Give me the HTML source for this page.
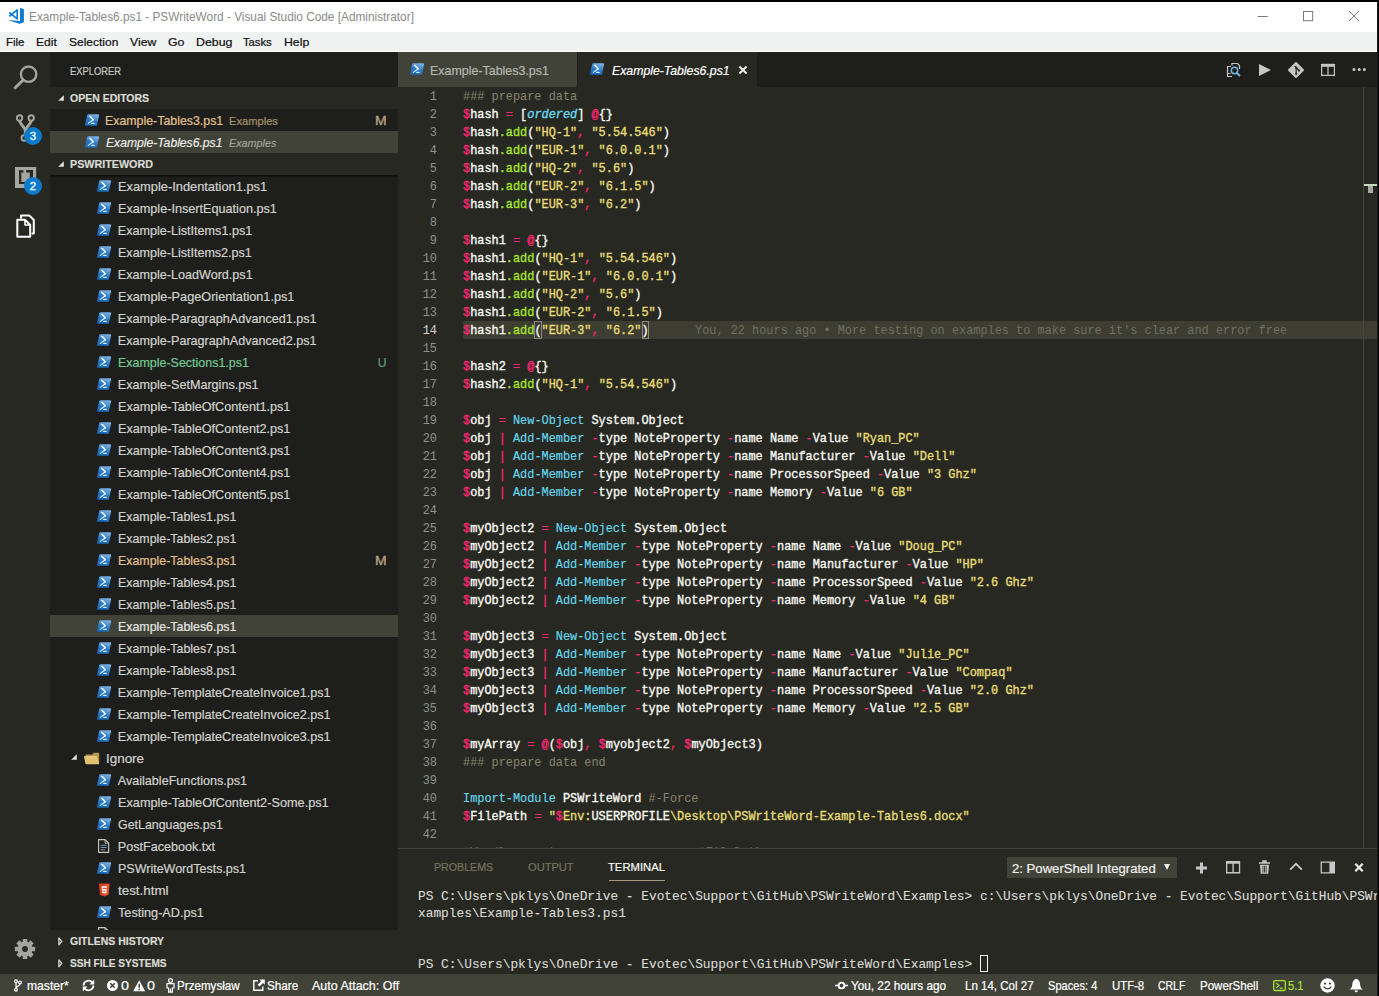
<!DOCTYPE html>
<html><head><meta charset="utf-8"><title>Example-Tables6.ps1 - PSWriteWord - Visual Studio Code</title>
<style>
*{box-sizing:border-box;margin:0;padding:0}
html,body{width:1379px;height:996px;overflow:hidden;background:#000}
body{font-family:"Liberation Sans",sans-serif;font-size:12.6px;color:#ccc;position:relative}
svg{display:block;overflow:visible}
#win{position:absolute;left:0;top:0;width:1377px;height:996px;overflow:hidden;background:#272822}
.badge{position:absolute;width:18px;height:18px;border-radius:9px;background:#0a7bcc;color:#fff;font-size:11.5px;text-align:center;line-height:18px;-webkit-text-stroke:0.3px #fff}
#ed{position:absolute;left:398px;top:87px;width:979px;height:761px;background:#272822;overflow:hidden;font-family:"Liberation Mono",monospace;font-size:11.9px}
.ln{position:absolute;left:0;width:39px;text-align:right;color:#90908a;height:18px;line-height:20px;white-space:pre}
.ln.cur{color:#d4d4cf}
.cl{position:absolute;left:65px;height:18px;line-height:20px;white-space:pre;color:#f8f8f2}
.cl span{-webkit-text-stroke:0.35px currentColor}
.k{color:#f92672}.w{color:#f8f8f2}.s{color:#e6db74}.f{color:#a6e22e}.c{color:#66d9ef}.cl .c{-webkit-text-stroke:0.15px currentColor}.t{color:#66d9ef;font-style:italic}.cm{color:#88846f}
.cl .cm{-webkit-text-stroke:0}
.cl .k{-webkit-text-stroke:0.3px currentColor}
.bl{color:#6e7062}
#term{position:absolute;left:418px;top:888px;font-family:"Liberation Mono",monospace;font-size:12.83px;color:#dadad5;white-space:pre;line-height:17px;-webkit-text-stroke:0.12px #dadad5}
</style></head>
<body>
<div id="win">
<svg width="0" height="0" style="position:absolute"><defs><linearGradient id="pg" x1="0.2" y1="1" x2="0.6" y2="0"><stop offset="0" stop-color="#1565b8"/><stop offset="0.5" stop-color="#2a7bcb"/><stop offset="1" stop-color="#78afe2"/></linearGradient></defs></svg>
<div style="position:absolute;left:0px;top:2px;width:1377px;height:30px;background:#fff;"></div>
<svg style="position:absolute;left:7px;top:7px" width="18" height="18" viewBox="0 0 18 18"><path d="M13 0.8L16.9 2.3V15.2L13 16.7Z" fill="#0d7acf"/><path d="M1 13.1L13 14V16.7H12.2Z" fill="#0d7acf"/><path d="M2.3 5.5L10.2 11.9V2.9L2.3 9.3" fill="none" stroke="#0d7acf" stroke-width="1.7" stroke-linejoin="round" stroke-linecap="butt"/></svg>
<span style="position:absolute;left:28.5px;top:7px;line-height:20px;white-space:pre;font-size:12.4px;color:#8a8a8a;transform:scaleX(0.9538);transform-origin:0 0;">Example-Tables6.ps1 - PSWriteWord - Visual Studio Code [Administrator]</span>
<svg style="position:absolute;left:1255px;top:8px" width="110" height="18" viewBox="0 0 110 18"><path d="M2.6 8.5H12.8" stroke="#7a7a7a" stroke-width="1"/><rect x="48.5" y="3.5" width="9.2" height="9.2" fill="none" stroke="#7a7a7a" stroke-width="1"/><path d="M94 3L104 13M104 3L94 13" stroke="#7a7a7a" stroke-width="1"/></svg>
<div style="position:absolute;left:0px;top:32px;width:1377px;height:19px;background:#f0f1f1;"></div>
<div style="position:absolute;left:0px;top:51px;width:1377px;height:1px;background:#fdfdfd;"></div>
<span style="position:absolute;left:6.0px;top:32px;line-height:20px;white-space:pre;font-size:11.8px;color:#0c0c0c;-webkit-text-stroke:0.2px #0c0c0c;transform:scaleX(0.9729);transform-origin:0 0;">File</span>
<span style="position:absolute;left:35.9px;top:32px;line-height:20px;white-space:pre;font-size:11.8px;color:#0c0c0c;-webkit-text-stroke:0.2px #0c0c0c;transform:scaleX(1.0232);transform-origin:0 0;">Edit</span>
<span style="position:absolute;left:68.7px;top:32px;line-height:20px;white-space:pre;font-size:11.8px;color:#0c0c0c;-webkit-text-stroke:0.2px #0c0c0c;transform:scaleX(1.0158);transform-origin:0 0;">Selection</span>
<span style="position:absolute;left:129.7px;top:32px;line-height:20px;white-space:pre;font-size:11.8px;color:#0c0c0c;-webkit-text-stroke:0.2px #0c0c0c;transform:scaleX(1.0371);transform-origin:0 0;">View</span>
<span style="position:absolute;left:167.7px;top:32px;line-height:20px;white-space:pre;font-size:11.8px;color:#0c0c0c;-webkit-text-stroke:0.2px #0c0c0c;transform:scaleX(1.0413);transform-origin:0 0;">Go</span>
<span style="position:absolute;left:195.8px;top:32px;line-height:20px;white-space:pre;font-size:11.8px;color:#0c0c0c;-webkit-text-stroke:0.2px #0c0c0c;transform:scaleX(1.0470);transform-origin:0 0;">Debug</span>
<span style="position:absolute;left:243.0px;top:32px;line-height:20px;white-space:pre;font-size:11.8px;color:#0c0c0c;-webkit-text-stroke:0.2px #0c0c0c;transform:scaleX(0.9517);transform-origin:0 0;">Tasks</span>
<span style="position:absolute;left:284.1px;top:32px;line-height:20px;white-space:pre;font-size:11.8px;color:#0c0c0c;-webkit-text-stroke:0.2px #0c0c0c;transform:scaleX(1.0385);transform-origin:0 0;">Help</span>
<div style="position:absolute;left:0px;top:52px;width:50px;height:922px;background:#272822;"></div>
<svg style="position:absolute;left:11px;top:63px" width="30" height="30" viewBox="0 0 30 30"><circle cx="17.6" cy="11.2" r="7.7" fill="none" stroke="#a5a59f" stroke-width="2.4"/><path d="M12.2 17L4.2 24.8" stroke="#a5a59f" stroke-width="3" stroke-linecap="round"/></svg>
<svg style="position:absolute;left:11px;top:112px" width="30" height="30" viewBox="0 0 30 30"><g fill="none" stroke="#a5a59f" stroke-width="1.9"><circle cx="8.6" cy="6" r="2.7"/><circle cx="20.2" cy="6" r="2.7"/><circle cx="13.2" cy="26" r="2.7"/></g><path d="M8.6 8.6C8.6 13 14.4 14.5 14.4 19V22.4M20.2 8.6C20.2 13 14.4 14.5 14.4 19" fill="none" stroke="#a5a59f" stroke-width="3.1"/></svg>
<div class="badge" style="left:24px;top:127px">3</div>
<svg style="position:absolute;left:11px;top:163px" width="30" height="30" viewBox="0 0 30 30"><path d="M4 4H25.2V25H4Z" fill="#a5a59f"/><path d="M8 7.2H12.5V9.6H10.3V19H18.8V9.6H15.2V7H22V14H20.6V21H8Z" fill="#272822"/></svg>
<div class="badge" style="left:24px;top:177px">2</div>
<svg style="position:absolute;left:11px;top:212px" width="30" height="30" viewBox="0 0 30 30"><g fill="none" stroke="#fff" stroke-width="2" stroke-linejoin="round"><path d="M6.3 7.7H14L19.2 13V24.7H6.3Z"/><path d="M14 7.7V13H19.2" stroke-width="1.6"/><path d="M10 6.4V3.6H18.5L22.8 8V21.5H20.6"/></g></svg>
<svg style="position:absolute;left:13px;top:937.3px" width="24" height="24" viewBox="0 0 24 24"><g transform="translate(12 12) scale(0.9)"><g fill="#a5a59f"><rect x="-2.5" y="-11.2" width="5" height="22.4" rx="0.5"/><rect x="-2.5" y="-11.2" width="5" height="22.4" rx="0.5" transform="rotate(45)"/><rect x="-2.5" y="-11.2" width="5" height="22.4" rx="0.5" transform="rotate(90)"/><rect x="-2.5" y="-11.2" width="5" height="22.4" rx="0.5" transform="rotate(135)"/><circle r="8.3"/></g><circle r="3.2" fill="#272822"/></g></svg>
<div style="position:absolute;left:50px;top:52px;width:348px;height:922px;background:#1e1f1c;"></div>
<span style="position:absolute;left:69.6px;top:61px;line-height:20px;white-space:pre;font-size:10.6px;color:#c8c8c3;-webkit-text-stroke:0.2px #c8c8c3;transform:scaleX(0.8856);transform-origin:0 0;">EXPLORER</span>
<div style="position:absolute;left:50px;top:87px;width:348px;height:22px;background:#272822;"></div>
<svg style="position:absolute;left:57.6px;top:94.6px" width="6" height="6" viewBox="0 0 6 6"><path d="M5.8 0.2V5.8H0.2Z" fill="#e2e2e2"/></svg>
<span style="position:absolute;left:69.6px;top:88px;line-height:20px;white-space:pre;font-size:10.6px;color:#dadad5;-webkit-text-stroke:0.2px #dadad5;font-weight:bold;transform:scaleX(0.9903);transform-origin:0 0;">OPEN EDITORS</span>
<svg style="position:absolute;left:85px;top:114px" width="14.2" height="12" viewBox="0 0 14.2 12"><path d="M3.2 0.2H13.3Q14.3 0.2 14.1 1.2L12 10.9Q11.8 11.8 10.9 11.8H0.8Q-0.2 11.8 0 10.9L2.2 1.1Q2.4 0.2 3.2 0.2Z" fill="url(#pg)"/><path d="M4.8 2.2L8.3 5.8" fill="none" stroke="#fff" stroke-width="1.5" stroke-linecap="round"/><path d="M8.3 5.8L3.3 9.4" fill="none" stroke="#f4f9fd" stroke-width="1.05" stroke-linecap="round"/><path d="M6.6 9.4H9.2" stroke="#d8e8f6" stroke-width="1.1" stroke-linecap="round"/></svg>
<span style="position:absolute;left:105.2px;top:111px;line-height:20px;white-space:pre;font-size:12.6px;color:#e2c08d;-webkit-text-stroke:0.2px #e2c08d;transform:scaleX(0.9817);transform-origin:0 0;">Example-Tables3.ps1</span>
<span style="position:absolute;left:229.3px;top:111px;line-height:20px;white-space:pre;font-size:11.4px;color:#a5946b;-webkit-text-stroke:0.2px #a5946b;transform:scaleX(0.9777);transform-origin:0 0;">Examples</span>
<span style="position:absolute;left:375.1px;top:111px;line-height:20px;white-space:pre;font-size:12px;color:#b39f76;-webkit-text-stroke:0.4px #b39f76;transform:scaleX(1.1600);transform-origin:0 0;">M</span>
<div style="position:absolute;left:50px;top:131px;width:348px;height:22px;background:#414339;"></div>
<svg style="position:absolute;left:85px;top:136px" width="14.2" height="12" viewBox="0 0 14.2 12"><path d="M3.2 0.2H13.3Q14.3 0.2 14.1 1.2L12 10.9Q11.8 11.8 10.9 11.8H0.8Q-0.2 11.8 0 10.9L2.2 1.1Q2.4 0.2 3.2 0.2Z" fill="url(#pg)"/><path d="M4.8 2.2L8.3 5.8" fill="none" stroke="#fff" stroke-width="1.5" stroke-linecap="round"/><path d="M8.3 5.8L3.3 9.4" fill="none" stroke="#f4f9fd" stroke-width="1.05" stroke-linecap="round"/><path d="M6.6 9.4H9.2" stroke="#d8e8f6" stroke-width="1.1" stroke-linecap="round"/></svg>
<span style="position:absolute;left:106.1px;top:133px;line-height:20px;white-space:pre;font-size:12.6px;color:#ecece7;-webkit-text-stroke:0.2px #ecece7;font-style:italic;transform:scaleX(0.9647);transform-origin:0 0;">Example-Tables6.ps1</span>
<span style="position:absolute;left:228.9px;top:133px;line-height:20px;white-space:pre;font-size:11.4px;color:#a3a398;-webkit-text-stroke:0.2px #a3a398;font-style:italic;transform:scaleX(0.9477);transform-origin:0 0;">Examples</span>
<div style="position:absolute;left:50px;top:153px;width:348px;height:22px;background:#272822;"></div>
<svg style="position:absolute;left:57.6px;top:160.6px" width="6" height="6" viewBox="0 0 6 6"><path d="M5.8 0.2V5.8H0.2Z" fill="#e2e2e2"/></svg>
<span style="position:absolute;left:69.6px;top:154px;line-height:20px;white-space:pre;font-size:10.6px;color:#dadad5;-webkit-text-stroke:0.2px #dadad5;font-weight:bold;transform:scaleX(1.0133);transform-origin:0 0;">PSWRITEWORD</span>
<div style="position:absolute;left:0;top:0;width:398px;height:930px;overflow:hidden"><svg style="position:absolute;left:97px;top:180px" width="14.2" height="12" viewBox="0 0 14.2 12"><path d="M3.2 0.2H13.3Q14.3 0.2 14.1 1.2L12 10.9Q11.8 11.8 10.9 11.8H0.8Q-0.2 11.8 0 10.9L2.2 1.1Q2.4 0.2 3.2 0.2Z" fill="url(#pg)"/><path d="M4.8 2.2L8.3 5.8" fill="none" stroke="#fff" stroke-width="1.5" stroke-linecap="round"/><path d="M8.3 5.8L3.3 9.4" fill="none" stroke="#f4f9fd" stroke-width="1.05" stroke-linecap="round"/><path d="M6.6 9.4H9.2" stroke="#d8e8f6" stroke-width="1.1" stroke-linecap="round"/></svg><span style="position:absolute;left:117.8px;top:177px;line-height:20px;white-space:pre;font-size:12.6px;color:#d2d2cd;-webkit-text-stroke:0.2px #d2d2cd;transform:scaleX(1.0189);transform-origin:0 0;">Example-Indentation1.ps1</span><svg style="position:absolute;left:97px;top:202px" width="14.2" height="12" viewBox="0 0 14.2 12"><path d="M3.2 0.2H13.3Q14.3 0.2 14.1 1.2L12 10.9Q11.8 11.8 10.9 11.8H0.8Q-0.2 11.8 0 10.9L2.2 1.1Q2.4 0.2 3.2 0.2Z" fill="url(#pg)"/><path d="M4.8 2.2L8.3 5.8" fill="none" stroke="#fff" stroke-width="1.5" stroke-linecap="round"/><path d="M8.3 5.8L3.3 9.4" fill="none" stroke="#f4f9fd" stroke-width="1.05" stroke-linecap="round"/><path d="M6.6 9.4H9.2" stroke="#d8e8f6" stroke-width="1.1" stroke-linecap="round"/></svg><span style="position:absolute;left:117.8px;top:199px;line-height:20px;white-space:pre;font-size:12.6px;color:#d2d2cd;-webkit-text-stroke:0.2px #d2d2cd;transform:scaleX(1.0043);transform-origin:0 0;">Example-InsertEquation.ps1</span><svg style="position:absolute;left:97px;top:224px" width="14.2" height="12" viewBox="0 0 14.2 12"><path d="M3.2 0.2H13.3Q14.3 0.2 14.1 1.2L12 10.9Q11.8 11.8 10.9 11.8H0.8Q-0.2 11.8 0 10.9L2.2 1.1Q2.4 0.2 3.2 0.2Z" fill="url(#pg)"/><path d="M4.8 2.2L8.3 5.8" fill="none" stroke="#fff" stroke-width="1.5" stroke-linecap="round"/><path d="M8.3 5.8L3.3 9.4" fill="none" stroke="#f4f9fd" stroke-width="1.05" stroke-linecap="round"/><path d="M6.6 9.4H9.2" stroke="#d8e8f6" stroke-width="1.1" stroke-linecap="round"/></svg><span style="position:absolute;left:117.8px;top:221px;line-height:20px;white-space:pre;font-size:12.6px;color:#d2d2cd;-webkit-text-stroke:0.2px #d2d2cd;">Example-ListItems1.ps1</span><svg style="position:absolute;left:97px;top:246px" width="14.2" height="12" viewBox="0 0 14.2 12"><path d="M3.2 0.2H13.3Q14.3 0.2 14.1 1.2L12 10.9Q11.8 11.8 10.9 11.8H0.8Q-0.2 11.8 0 10.9L2.2 1.1Q2.4 0.2 3.2 0.2Z" fill="url(#pg)"/><path d="M4.8 2.2L8.3 5.8" fill="none" stroke="#fff" stroke-width="1.5" stroke-linecap="round"/><path d="M8.3 5.8L3.3 9.4" fill="none" stroke="#f4f9fd" stroke-width="1.05" stroke-linecap="round"/><path d="M6.6 9.4H9.2" stroke="#d8e8f6" stroke-width="1.1" stroke-linecap="round"/></svg><span style="position:absolute;left:117.8px;top:243px;line-height:20px;white-space:pre;font-size:12.6px;color:#d2d2cd;-webkit-text-stroke:0.2px #d2d2cd;transform:scaleX(0.9956);transform-origin:0 0;">Example-ListItems2.ps1</span><svg style="position:absolute;left:97px;top:268px" width="14.2" height="12" viewBox="0 0 14.2 12"><path d="M3.2 0.2H13.3Q14.3 0.2 14.1 1.2L12 10.9Q11.8 11.8 10.9 11.8H0.8Q-0.2 11.8 0 10.9L2.2 1.1Q2.4 0.2 3.2 0.2Z" fill="url(#pg)"/><path d="M4.8 2.2L8.3 5.8" fill="none" stroke="#fff" stroke-width="1.5" stroke-linecap="round"/><path d="M8.3 5.8L3.3 9.4" fill="none" stroke="#f4f9fd" stroke-width="1.05" stroke-linecap="round"/><path d="M6.6 9.4H9.2" stroke="#d8e8f6" stroke-width="1.1" stroke-linecap="round"/></svg><span style="position:absolute;left:117.8px;top:265px;line-height:20px;white-space:pre;font-size:12.6px;color:#d2d2cd;-webkit-text-stroke:0.2px #d2d2cd;">Example-LoadWord.ps1</span><svg style="position:absolute;left:97px;top:290px" width="14.2" height="12" viewBox="0 0 14.2 12"><path d="M3.2 0.2H13.3Q14.3 0.2 14.1 1.2L12 10.9Q11.8 11.8 10.9 11.8H0.8Q-0.2 11.8 0 10.9L2.2 1.1Q2.4 0.2 3.2 0.2Z" fill="url(#pg)"/><path d="M4.8 2.2L8.3 5.8" fill="none" stroke="#fff" stroke-width="1.5" stroke-linecap="round"/><path d="M8.3 5.8L3.3 9.4" fill="none" stroke="#f4f9fd" stroke-width="1.05" stroke-linecap="round"/><path d="M6.6 9.4H9.2" stroke="#d8e8f6" stroke-width="1.1" stroke-linecap="round"/></svg><span style="position:absolute;left:117.8px;top:287px;line-height:20px;white-space:pre;font-size:12.6px;color:#d2d2cd;-webkit-text-stroke:0.2px #d2d2cd;transform:scaleX(1.0079);transform-origin:0 0;">Example-PageOrientation1.ps1</span><svg style="position:absolute;left:97px;top:312px" width="14.2" height="12" viewBox="0 0 14.2 12"><path d="M3.2 0.2H13.3Q14.3 0.2 14.1 1.2L12 10.9Q11.8 11.8 10.9 11.8H0.8Q-0.2 11.8 0 10.9L2.2 1.1Q2.4 0.2 3.2 0.2Z" fill="url(#pg)"/><path d="M4.8 2.2L8.3 5.8" fill="none" stroke="#fff" stroke-width="1.5" stroke-linecap="round"/><path d="M8.3 5.8L3.3 9.4" fill="none" stroke="#f4f9fd" stroke-width="1.05" stroke-linecap="round"/><path d="M6.6 9.4H9.2" stroke="#d8e8f6" stroke-width="1.1" stroke-linecap="round"/></svg><span style="position:absolute;left:117.8px;top:309px;line-height:20px;white-space:pre;font-size:12.6px;color:#d2d2cd;-webkit-text-stroke:0.2px #d2d2cd;">Example-ParagraphAdvanced1.ps1</span><svg style="position:absolute;left:97px;top:334px" width="14.2" height="12" viewBox="0 0 14.2 12"><path d="M3.2 0.2H13.3Q14.3 0.2 14.1 1.2L12 10.9Q11.8 11.8 10.9 11.8H0.8Q-0.2 11.8 0 10.9L2.2 1.1Q2.4 0.2 3.2 0.2Z" fill="url(#pg)"/><path d="M4.8 2.2L8.3 5.8" fill="none" stroke="#fff" stroke-width="1.5" stroke-linecap="round"/><path d="M8.3 5.8L3.3 9.4" fill="none" stroke="#f4f9fd" stroke-width="1.05" stroke-linecap="round"/><path d="M6.6 9.4H9.2" stroke="#d8e8f6" stroke-width="1.1" stroke-linecap="round"/></svg><span style="position:absolute;left:117.8px;top:331px;line-height:20px;white-space:pre;font-size:12.6px;color:#d2d2cd;-webkit-text-stroke:0.2px #d2d2cd;">Example-ParagraphAdvanced2.ps1</span><svg style="position:absolute;left:97px;top:356px" width="14.2" height="12" viewBox="0 0 14.2 12"><path d="M3.2 0.2H13.3Q14.3 0.2 14.1 1.2L12 10.9Q11.8 11.8 10.9 11.8H0.8Q-0.2 11.8 0 10.9L2.2 1.1Q2.4 0.2 3.2 0.2Z" fill="url(#pg)"/><path d="M4.8 2.2L8.3 5.8" fill="none" stroke="#fff" stroke-width="1.5" stroke-linecap="round"/><path d="M8.3 5.8L3.3 9.4" fill="none" stroke="#f4f9fd" stroke-width="1.05" stroke-linecap="round"/><path d="M6.6 9.4H9.2" stroke="#d8e8f6" stroke-width="1.1" stroke-linecap="round"/></svg><span style="position:absolute;left:117.8px;top:353px;line-height:20px;white-space:pre;font-size:12.6px;color:#73c991;-webkit-text-stroke:0.2px #73c991;transform:scaleX(0.9893);transform-origin:0 0;">Example-Sections1.ps1</span><span style="position:absolute;left:377.8px;top:353px;line-height:20px;white-space:pre;font-size:12px;color:#5e9c78;-webkit-text-stroke:0.2px #5e9c78;">U</span><svg style="position:absolute;left:97px;top:378px" width="14.2" height="12" viewBox="0 0 14.2 12"><path d="M3.2 0.2H13.3Q14.3 0.2 14.1 1.2L12 10.9Q11.8 11.8 10.9 11.8H0.8Q-0.2 11.8 0 10.9L2.2 1.1Q2.4 0.2 3.2 0.2Z" fill="url(#pg)"/><path d="M4.8 2.2L8.3 5.8" fill="none" stroke="#fff" stroke-width="1.5" stroke-linecap="round"/><path d="M8.3 5.8L3.3 9.4" fill="none" stroke="#f4f9fd" stroke-width="1.05" stroke-linecap="round"/><path d="M6.6 9.4H9.2" stroke="#d8e8f6" stroke-width="1.1" stroke-linecap="round"/></svg><span style="position:absolute;left:117.8px;top:375px;line-height:20px;white-space:pre;font-size:12.6px;color:#d2d2cd;-webkit-text-stroke:0.2px #d2d2cd;">Example-SetMargins.ps1</span><svg style="position:absolute;left:97px;top:400px" width="14.2" height="12" viewBox="0 0 14.2 12"><path d="M3.2 0.2H13.3Q14.3 0.2 14.1 1.2L12 10.9Q11.8 11.8 10.9 11.8H0.8Q-0.2 11.8 0 10.9L2.2 1.1Q2.4 0.2 3.2 0.2Z" fill="url(#pg)"/><path d="M4.8 2.2L8.3 5.8" fill="none" stroke="#fff" stroke-width="1.5" stroke-linecap="round"/><path d="M8.3 5.8L3.3 9.4" fill="none" stroke="#f4f9fd" stroke-width="1.05" stroke-linecap="round"/><path d="M6.6 9.4H9.2" stroke="#d8e8f6" stroke-width="1.1" stroke-linecap="round"/></svg><span style="position:absolute;left:117.8px;top:397px;line-height:20px;white-space:pre;font-size:12.6px;color:#d2d2cd;-webkit-text-stroke:0.2px #d2d2cd;transform:scaleX(1.0052);transform-origin:0 0;">Example-TableOfContent1.ps1</span><svg style="position:absolute;left:97px;top:422px" width="14.2" height="12" viewBox="0 0 14.2 12"><path d="M3.2 0.2H13.3Q14.3 0.2 14.1 1.2L12 10.9Q11.8 11.8 10.9 11.8H0.8Q-0.2 11.8 0 10.9L2.2 1.1Q2.4 0.2 3.2 0.2Z" fill="url(#pg)"/><path d="M4.8 2.2L8.3 5.8" fill="none" stroke="#fff" stroke-width="1.5" stroke-linecap="round"/><path d="M8.3 5.8L3.3 9.4" fill="none" stroke="#f4f9fd" stroke-width="1.05" stroke-linecap="round"/><path d="M6.6 9.4H9.2" stroke="#d8e8f6" stroke-width="1.1" stroke-linecap="round"/></svg><span style="position:absolute;left:117.8px;top:419px;line-height:20px;white-space:pre;font-size:12.6px;color:#d2d2cd;-webkit-text-stroke:0.2px #d2d2cd;transform:scaleX(1.0052);transform-origin:0 0;">Example-TableOfContent2.ps1</span><svg style="position:absolute;left:97px;top:444px" width="14.2" height="12" viewBox="0 0 14.2 12"><path d="M3.2 0.2H13.3Q14.3 0.2 14.1 1.2L12 10.9Q11.8 11.8 10.9 11.8H0.8Q-0.2 11.8 0 10.9L2.2 1.1Q2.4 0.2 3.2 0.2Z" fill="url(#pg)"/><path d="M4.8 2.2L8.3 5.8" fill="none" stroke="#fff" stroke-width="1.5" stroke-linecap="round"/><path d="M8.3 5.8L3.3 9.4" fill="none" stroke="#f4f9fd" stroke-width="1.05" stroke-linecap="round"/><path d="M6.6 9.4H9.2" stroke="#d8e8f6" stroke-width="1.1" stroke-linecap="round"/></svg><span style="position:absolute;left:117.8px;top:441px;line-height:20px;white-space:pre;font-size:12.6px;color:#d2d2cd;-webkit-text-stroke:0.2px #d2d2cd;transform:scaleX(1.0052);transform-origin:0 0;">Example-TableOfContent3.ps1</span><svg style="position:absolute;left:97px;top:466px" width="14.2" height="12" viewBox="0 0 14.2 12"><path d="M3.2 0.2H13.3Q14.3 0.2 14.1 1.2L12 10.9Q11.8 11.8 10.9 11.8H0.8Q-0.2 11.8 0 10.9L2.2 1.1Q2.4 0.2 3.2 0.2Z" fill="url(#pg)"/><path d="M4.8 2.2L8.3 5.8" fill="none" stroke="#fff" stroke-width="1.5" stroke-linecap="round"/><path d="M8.3 5.8L3.3 9.4" fill="none" stroke="#f4f9fd" stroke-width="1.05" stroke-linecap="round"/><path d="M6.6 9.4H9.2" stroke="#d8e8f6" stroke-width="1.1" stroke-linecap="round"/></svg><span style="position:absolute;left:117.8px;top:463px;line-height:20px;white-space:pre;font-size:12.6px;color:#d2d2cd;-webkit-text-stroke:0.2px #d2d2cd;transform:scaleX(1.0052);transform-origin:0 0;">Example-TableOfContent4.ps1</span><svg style="position:absolute;left:97px;top:488px" width="14.2" height="12" viewBox="0 0 14.2 12"><path d="M3.2 0.2H13.3Q14.3 0.2 14.1 1.2L12 10.9Q11.8 11.8 10.9 11.8H0.8Q-0.2 11.8 0 10.9L2.2 1.1Q2.4 0.2 3.2 0.2Z" fill="url(#pg)"/><path d="M4.8 2.2L8.3 5.8" fill="none" stroke="#fff" stroke-width="1.5" stroke-linecap="round"/><path d="M8.3 5.8L3.3 9.4" fill="none" stroke="#f4f9fd" stroke-width="1.05" stroke-linecap="round"/><path d="M6.6 9.4H9.2" stroke="#d8e8f6" stroke-width="1.1" stroke-linecap="round"/></svg><span style="position:absolute;left:117.8px;top:485px;line-height:20px;white-space:pre;font-size:12.6px;color:#d2d2cd;-webkit-text-stroke:0.2px #d2d2cd;transform:scaleX(1.0052);transform-origin:0 0;">Example-TableOfContent5.ps1</span><svg style="position:absolute;left:97px;top:510px" width="14.2" height="12" viewBox="0 0 14.2 12"><path d="M3.2 0.2H13.3Q14.3 0.2 14.1 1.2L12 10.9Q11.8 11.8 10.9 11.8H0.8Q-0.2 11.8 0 10.9L2.2 1.1Q2.4 0.2 3.2 0.2Z" fill="url(#pg)"/><path d="M4.8 2.2L8.3 5.8" fill="none" stroke="#fff" stroke-width="1.5" stroke-linecap="round"/><path d="M8.3 5.8L3.3 9.4" fill="none" stroke="#f4f9fd" stroke-width="1.05" stroke-linecap="round"/><path d="M6.6 9.4H9.2" stroke="#d8e8f6" stroke-width="1.1" stroke-linecap="round"/></svg><span style="position:absolute;left:117.8px;top:507px;line-height:20px;white-space:pre;font-size:12.6px;color:#d2d2cd;-webkit-text-stroke:0.2px #d2d2cd;transform:scaleX(0.9833);transform-origin:0 0;">Example-Tables1.ps1</span><svg style="position:absolute;left:97px;top:532px" width="14.2" height="12" viewBox="0 0 14.2 12"><path d="M3.2 0.2H13.3Q14.3 0.2 14.1 1.2L12 10.9Q11.8 11.8 10.9 11.8H0.8Q-0.2 11.8 0 10.9L2.2 1.1Q2.4 0.2 3.2 0.2Z" fill="url(#pg)"/><path d="M4.8 2.2L8.3 5.8" fill="none" stroke="#fff" stroke-width="1.5" stroke-linecap="round"/><path d="M8.3 5.8L3.3 9.4" fill="none" stroke="#f4f9fd" stroke-width="1.05" stroke-linecap="round"/><path d="M6.6 9.4H9.2" stroke="#d8e8f6" stroke-width="1.1" stroke-linecap="round"/></svg><span style="position:absolute;left:117.8px;top:529px;line-height:20px;white-space:pre;font-size:12.6px;color:#d2d2cd;-webkit-text-stroke:0.2px #d2d2cd;transform:scaleX(0.9833);transform-origin:0 0;">Example-Tables2.ps1</span><svg style="position:absolute;left:97px;top:554px" width="14.2" height="12" viewBox="0 0 14.2 12"><path d="M3.2 0.2H13.3Q14.3 0.2 14.1 1.2L12 10.9Q11.8 11.8 10.9 11.8H0.8Q-0.2 11.8 0 10.9L2.2 1.1Q2.4 0.2 3.2 0.2Z" fill="url(#pg)"/><path d="M4.8 2.2L8.3 5.8" fill="none" stroke="#fff" stroke-width="1.5" stroke-linecap="round"/><path d="M8.3 5.8L3.3 9.4" fill="none" stroke="#f4f9fd" stroke-width="1.05" stroke-linecap="round"/><path d="M6.6 9.4H9.2" stroke="#d8e8f6" stroke-width="1.1" stroke-linecap="round"/></svg><span style="position:absolute;left:117.8px;top:551px;line-height:20px;white-space:pre;font-size:12.6px;color:#e2c08d;-webkit-text-stroke:0.2px #e2c08d;transform:scaleX(0.9833);transform-origin:0 0;">Example-Tables3.ps1</span><span style="position:absolute;left:375.1px;top:551px;line-height:20px;white-space:pre;font-size:12px;color:#b39f76;-webkit-text-stroke:0.4px #b39f76;transform:scaleX(1.1600);transform-origin:0 0;">M</span><svg style="position:absolute;left:97px;top:576px" width="14.2" height="12" viewBox="0 0 14.2 12"><path d="M3.2 0.2H13.3Q14.3 0.2 14.1 1.2L12 10.9Q11.8 11.8 10.9 11.8H0.8Q-0.2 11.8 0 10.9L2.2 1.1Q2.4 0.2 3.2 0.2Z" fill="url(#pg)"/><path d="M4.8 2.2L8.3 5.8" fill="none" stroke="#fff" stroke-width="1.5" stroke-linecap="round"/><path d="M8.3 5.8L3.3 9.4" fill="none" stroke="#f4f9fd" stroke-width="1.05" stroke-linecap="round"/><path d="M6.6 9.4H9.2" stroke="#d8e8f6" stroke-width="1.1" stroke-linecap="round"/></svg><span style="position:absolute;left:117.8px;top:573px;line-height:20px;white-space:pre;font-size:12.6px;color:#d2d2cd;-webkit-text-stroke:0.2px #d2d2cd;transform:scaleX(0.9833);transform-origin:0 0;">Example-Tables4.ps1</span><svg style="position:absolute;left:97px;top:598px" width="14.2" height="12" viewBox="0 0 14.2 12"><path d="M3.2 0.2H13.3Q14.3 0.2 14.1 1.2L12 10.9Q11.8 11.8 10.9 11.8H0.8Q-0.2 11.8 0 10.9L2.2 1.1Q2.4 0.2 3.2 0.2Z" fill="url(#pg)"/><path d="M4.8 2.2L8.3 5.8" fill="none" stroke="#fff" stroke-width="1.5" stroke-linecap="round"/><path d="M8.3 5.8L3.3 9.4" fill="none" stroke="#f4f9fd" stroke-width="1.05" stroke-linecap="round"/><path d="M6.6 9.4H9.2" stroke="#d8e8f6" stroke-width="1.1" stroke-linecap="round"/></svg><span style="position:absolute;left:117.8px;top:595px;line-height:20px;white-space:pre;font-size:12.6px;color:#d2d2cd;-webkit-text-stroke:0.2px #d2d2cd;transform:scaleX(0.9833);transform-origin:0 0;">Example-Tables5.ps1</span><div style="position:absolute;left:50px;top:615px;width:348px;height:22px;background:#414339;"></div><svg style="position:absolute;left:97px;top:620px" width="14.2" height="12" viewBox="0 0 14.2 12"><path d="M3.2 0.2H13.3Q14.3 0.2 14.1 1.2L12 10.9Q11.8 11.8 10.9 11.8H0.8Q-0.2 11.8 0 10.9L2.2 1.1Q2.4 0.2 3.2 0.2Z" fill="url(#pg)"/><path d="M4.8 2.2L8.3 5.8" fill="none" stroke="#fff" stroke-width="1.5" stroke-linecap="round"/><path d="M8.3 5.8L3.3 9.4" fill="none" stroke="#f4f9fd" stroke-width="1.05" stroke-linecap="round"/><path d="M6.6 9.4H9.2" stroke="#d8e8f6" stroke-width="1.1" stroke-linecap="round"/></svg><span style="position:absolute;left:117.8px;top:617px;line-height:20px;white-space:pre;font-size:12.6px;color:#e6e6e1;-webkit-text-stroke:0.2px #e6e6e1;transform:scaleX(0.9833);transform-origin:0 0;">Example-Tables6.ps1</span><svg style="position:absolute;left:97px;top:642px" width="14.2" height="12" viewBox="0 0 14.2 12"><path d="M3.2 0.2H13.3Q14.3 0.2 14.1 1.2L12 10.9Q11.8 11.8 10.9 11.8H0.8Q-0.2 11.8 0 10.9L2.2 1.1Q2.4 0.2 3.2 0.2Z" fill="url(#pg)"/><path d="M4.8 2.2L8.3 5.8" fill="none" stroke="#fff" stroke-width="1.5" stroke-linecap="round"/><path d="M8.3 5.8L3.3 9.4" fill="none" stroke="#f4f9fd" stroke-width="1.05" stroke-linecap="round"/><path d="M6.6 9.4H9.2" stroke="#d8e8f6" stroke-width="1.1" stroke-linecap="round"/></svg><span style="position:absolute;left:117.8px;top:639px;line-height:20px;white-space:pre;font-size:12.6px;color:#d2d2cd;-webkit-text-stroke:0.2px #d2d2cd;transform:scaleX(0.9833);transform-origin:0 0;">Example-Tables7.ps1</span><svg style="position:absolute;left:97px;top:664px" width="14.2" height="12" viewBox="0 0 14.2 12"><path d="M3.2 0.2H13.3Q14.3 0.2 14.1 1.2L12 10.9Q11.8 11.8 10.9 11.8H0.8Q-0.2 11.8 0 10.9L2.2 1.1Q2.4 0.2 3.2 0.2Z" fill="url(#pg)"/><path d="M4.8 2.2L8.3 5.8" fill="none" stroke="#fff" stroke-width="1.5" stroke-linecap="round"/><path d="M8.3 5.8L3.3 9.4" fill="none" stroke="#f4f9fd" stroke-width="1.05" stroke-linecap="round"/><path d="M6.6 9.4H9.2" stroke="#d8e8f6" stroke-width="1.1" stroke-linecap="round"/></svg><span style="position:absolute;left:117.8px;top:661px;line-height:20px;white-space:pre;font-size:12.6px;color:#d2d2cd;-webkit-text-stroke:0.2px #d2d2cd;transform:scaleX(0.9833);transform-origin:0 0;">Example-Tables8.ps1</span><svg style="position:absolute;left:97px;top:686px" width="14.2" height="12" viewBox="0 0 14.2 12"><path d="M3.2 0.2H13.3Q14.3 0.2 14.1 1.2L12 10.9Q11.8 11.8 10.9 11.8H0.8Q-0.2 11.8 0 10.9L2.2 1.1Q2.4 0.2 3.2 0.2Z" fill="url(#pg)"/><path d="M4.8 2.2L8.3 5.8" fill="none" stroke="#fff" stroke-width="1.5" stroke-linecap="round"/><path d="M8.3 5.8L3.3 9.4" fill="none" stroke="#f4f9fd" stroke-width="1.05" stroke-linecap="round"/><path d="M6.6 9.4H9.2" stroke="#d8e8f6" stroke-width="1.1" stroke-linecap="round"/></svg><span style="position:absolute;left:117.8px;top:683px;line-height:20px;white-space:pre;font-size:12.6px;color:#d2d2cd;-webkit-text-stroke:0.2px #d2d2cd;">Example-TemplateCreateInvoice1.ps1</span><svg style="position:absolute;left:97px;top:708px" width="14.2" height="12" viewBox="0 0 14.2 12"><path d="M3.2 0.2H13.3Q14.3 0.2 14.1 1.2L12 10.9Q11.8 11.8 10.9 11.8H0.8Q-0.2 11.8 0 10.9L2.2 1.1Q2.4 0.2 3.2 0.2Z" fill="url(#pg)"/><path d="M4.8 2.2L8.3 5.8" fill="none" stroke="#fff" stroke-width="1.5" stroke-linecap="round"/><path d="M8.3 5.8L3.3 9.4" fill="none" stroke="#f4f9fd" stroke-width="1.05" stroke-linecap="round"/><path d="M6.6 9.4H9.2" stroke="#d8e8f6" stroke-width="1.1" stroke-linecap="round"/></svg><span style="position:absolute;left:117.8px;top:705px;line-height:20px;white-space:pre;font-size:12.6px;color:#d2d2cd;-webkit-text-stroke:0.2px #d2d2cd;">Example-TemplateCreateInvoice2.ps1</span><svg style="position:absolute;left:97px;top:730px" width="14.2" height="12" viewBox="0 0 14.2 12"><path d="M3.2 0.2H13.3Q14.3 0.2 14.1 1.2L12 10.9Q11.8 11.8 10.9 11.8H0.8Q-0.2 11.8 0 10.9L2.2 1.1Q2.4 0.2 3.2 0.2Z" fill="url(#pg)"/><path d="M4.8 2.2L8.3 5.8" fill="none" stroke="#fff" stroke-width="1.5" stroke-linecap="round"/><path d="M8.3 5.8L3.3 9.4" fill="none" stroke="#f4f9fd" stroke-width="1.05" stroke-linecap="round"/><path d="M6.6 9.4H9.2" stroke="#d8e8f6" stroke-width="1.1" stroke-linecap="round"/></svg><span style="position:absolute;left:117.8px;top:727px;line-height:20px;white-space:pre;font-size:12.6px;color:#d2d2cd;-webkit-text-stroke:0.2px #d2d2cd;">Example-TemplateCreateInvoice3.ps1</span><svg style="position:absolute;left:70.5px;top:754.4px" width="6" height="6" viewBox="0 0 6 6"><path d="M5.8 0.2V5.8H0.2Z" fill="#e2e2e2"/></svg><svg style="position:absolute;left:84.2px;top:752.4px" width="15.4" height="12.4" viewBox="0 0 15.4 12.4"><path d="M1.6 2.6H8.4L9.6 0.8H14.4Q15.2 0.8 15.2 1.6V11.4H1.6Z" fill="#b9944c"/><path d="M0.5 4.2H12.4Q13 4.2 13.2 4.8L15 11.4Q15.2 12.2 14.4 12.2H2.4Q1.7 12.2 1.5 11.5L0 5Q-0.1 4.2 0.5 4.2Z" fill="#e2c170"/><path d="M0.6 4.9H12.6" stroke="#f0d994" stroke-width="0.8"/></svg><span style="position:absolute;left:105.7px;top:749px;line-height:20px;white-space:pre;font-size:12.6px;color:#d2d2cd;-webkit-text-stroke:0.2px #d2d2cd;transform:scaleX(1.0639);transform-origin:0 0;">Ignore</span><svg style="position:absolute;left:97px;top:774px" width="14.2" height="12" viewBox="0 0 14.2 12"><path d="M3.2 0.2H13.3Q14.3 0.2 14.1 1.2L12 10.9Q11.8 11.8 10.9 11.8H0.8Q-0.2 11.8 0 10.9L2.2 1.1Q2.4 0.2 3.2 0.2Z" fill="url(#pg)"/><path d="M4.8 2.2L8.3 5.8" fill="none" stroke="#fff" stroke-width="1.5" stroke-linecap="round"/><path d="M8.3 5.8L3.3 9.4" fill="none" stroke="#f4f9fd" stroke-width="1.05" stroke-linecap="round"/><path d="M6.6 9.4H9.2" stroke="#d8e8f6" stroke-width="1.1" stroke-linecap="round"/></svg><span style="position:absolute;left:117.8px;top:771px;line-height:20px;white-space:pre;font-size:12.6px;color:#d2d2cd;-webkit-text-stroke:0.2px #d2d2cd;">AvailableFunctions.ps1</span><svg style="position:absolute;left:97px;top:796px" width="14.2" height="12" viewBox="0 0 14.2 12"><path d="M3.2 0.2H13.3Q14.3 0.2 14.1 1.2L12 10.9Q11.8 11.8 10.9 11.8H0.8Q-0.2 11.8 0 10.9L2.2 1.1Q2.4 0.2 3.2 0.2Z" fill="url(#pg)"/><path d="M4.8 2.2L8.3 5.8" fill="none" stroke="#fff" stroke-width="1.5" stroke-linecap="round"/><path d="M8.3 5.8L3.3 9.4" fill="none" stroke="#f4f9fd" stroke-width="1.05" stroke-linecap="round"/><path d="M6.6 9.4H9.2" stroke="#d8e8f6" stroke-width="1.1" stroke-linecap="round"/></svg><span style="position:absolute;left:117.8px;top:793px;line-height:20px;white-space:pre;font-size:12.6px;color:#d2d2cd;-webkit-text-stroke:0.2px #d2d2cd;transform:scaleX(1.0100);transform-origin:0 0;">Example-TableOfContent2-Some.ps1</span><svg style="position:absolute;left:97px;top:818px" width="14.2" height="12" viewBox="0 0 14.2 12"><path d="M3.2 0.2H13.3Q14.3 0.2 14.1 1.2L12 10.9Q11.8 11.8 10.9 11.8H0.8Q-0.2 11.8 0 10.9L2.2 1.1Q2.4 0.2 3.2 0.2Z" fill="url(#pg)"/><path d="M4.8 2.2L8.3 5.8" fill="none" stroke="#fff" stroke-width="1.5" stroke-linecap="round"/><path d="M8.3 5.8L3.3 9.4" fill="none" stroke="#f4f9fd" stroke-width="1.05" stroke-linecap="round"/><path d="M6.6 9.4H9.2" stroke="#d8e8f6" stroke-width="1.1" stroke-linecap="round"/></svg><span style="position:absolute;left:117.8px;top:815px;line-height:20px;white-space:pre;font-size:12.6px;color:#d2d2cd;-webkit-text-stroke:0.2px #d2d2cd;transform:scaleX(0.9846);transform-origin:0 0;">GetLanguages.ps1</span><svg style="position:absolute;left:97.2px;top:839.2px" width="13.2" height="14" viewBox="0 0 14 15"><path d="M1.6 0.7H8.6L12.4 4.4V14.3H1.6Z" fill="none" stroke="#cdc8b4" stroke-width="1.2" stroke-linejoin="round"/><path d="M8.6 0.7V4.4H12.4" fill="none" stroke="#cdc8b4" stroke-width="1"/><path d="M3.8 6.6H10.2M3.8 9H10.2M3.8 11.4H8.6" stroke="#6f9cc4" stroke-width="1.1"/></svg><span style="position:absolute;left:117.8px;top:837px;line-height:20px;white-space:pre;font-size:12.6px;color:#d2d2cd;-webkit-text-stroke:0.2px #d2d2cd;">PostFacebook.txt</span><svg style="position:absolute;left:97px;top:862px" width="14.2" height="12" viewBox="0 0 14.2 12"><path d="M3.2 0.2H13.3Q14.3 0.2 14.1 1.2L12 10.9Q11.8 11.8 10.9 11.8H0.8Q-0.2 11.8 0 10.9L2.2 1.1Q2.4 0.2 3.2 0.2Z" fill="url(#pg)"/><path d="M4.8 2.2L8.3 5.8" fill="none" stroke="#fff" stroke-width="1.5" stroke-linecap="round"/><path d="M8.3 5.8L3.3 9.4" fill="none" stroke="#f4f9fd" stroke-width="1.05" stroke-linecap="round"/><path d="M6.6 9.4H9.2" stroke="#d8e8f6" stroke-width="1.1" stroke-linecap="round"/></svg><span style="position:absolute;left:117.8px;top:859px;line-height:20px;white-space:pre;font-size:12.6px;color:#d2d2cd;-webkit-text-stroke:0.2px #d2d2cd;transform:scaleX(0.9921);transform-origin:0 0;">PSWriteWordTests.ps1</span><svg style="position:absolute;left:97.8px;top:883px" width="12.6" height="14" viewBox="0 0 14 15"><path d="M1 0.3H13L11.9 12.9L7 14.7L2.1 12.9Z" fill="#dd3e22"/><path d="M7 1.4V13.6L11 12.1L11.9 1.4Z" fill="#ea5a30"/><path d="M4 3.3H10L9.85 5H5.6L5.75 6.6H9.7L9.3 10.7L7 11.5L4.7 10.7L4.55 9H6.1L6.2 9.7L7 9.95L7.8 9.7L7.95 8.2H4.4Z" fill="#fff"/></svg><span style="position:absolute;left:117.8px;top:881px;line-height:20px;white-space:pre;font-size:12.6px;color:#d2d2cd;-webkit-text-stroke:0.2px #d2d2cd;transform:scaleX(1.0632);transform-origin:0 0;">test.html</span><svg style="position:absolute;left:97px;top:906px" width="14.2" height="12" viewBox="0 0 14.2 12"><path d="M3.2 0.2H13.3Q14.3 0.2 14.1 1.2L12 10.9Q11.8 11.8 10.9 11.8H0.8Q-0.2 11.8 0 10.9L2.2 1.1Q2.4 0.2 3.2 0.2Z" fill="url(#pg)"/><path d="M4.8 2.2L8.3 5.8" fill="none" stroke="#fff" stroke-width="1.5" stroke-linecap="round"/><path d="M8.3 5.8L3.3 9.4" fill="none" stroke="#f4f9fd" stroke-width="1.05" stroke-linecap="round"/><path d="M6.6 9.4H9.2" stroke="#d8e8f6" stroke-width="1.1" stroke-linecap="round"/></svg><span style="position:absolute;left:117.8px;top:903px;line-height:20px;white-space:pre;font-size:12.6px;color:#d2d2cd;-webkit-text-stroke:0.2px #d2d2cd;transform:scaleX(1.0058);transform-origin:0 0;">Testing-AD.ps1</span><svg style="position:absolute;left:97.2px;top:927.2px" width="13.2" height="14" viewBox="0 0 14 15"><path d="M1.6 0.7H8.6L12.4 4.4V14.3H1.6Z" fill="none" stroke="#cdc8b4" stroke-width="1.2" stroke-linejoin="round"/><path d="M8.6 0.7V4.4H12.4" fill="none" stroke="#cdc8b4" stroke-width="1"/><path d="M3.8 6.6H10.2M3.8 9H10.2M3.8 11.4H8.6" stroke="#6f9cc4" stroke-width="1.1"/></svg></div>
<div style="position:absolute;left:50px;top:175px;width:348px;height:3px;background:linear-gradient(#0c0c0a,rgba(12,12,10,0))"></div>
<div style="position:absolute;left:50px;top:930px;width:348px;height:22px;background:#272822;"></div>
<svg style="position:absolute;left:57.6px;top:936.6px" width="6" height="9" viewBox="0 0 6 9"><path d="M0.9 1L3.8 4.4L0.9 7.8Z" fill="none" stroke="#d0d0d0" stroke-width="1.4" stroke-linejoin="round"/></svg>
<span style="position:absolute;left:69.6px;top:931px;line-height:20px;white-space:pre;font-size:10.6px;color:#dadad5;-webkit-text-stroke:0.2px #dadad5;font-weight:bold;transform:scaleX(0.9868);transform-origin:0 0;">GITLENS HISTORY</span>
<div style="position:absolute;left:50px;top:952px;width:348px;height:22px;background:#272822;"></div>
<svg style="position:absolute;left:57.6px;top:958.6px" width="6" height="9" viewBox="0 0 6 9"><path d="M0.9 1L3.8 4.4L0.9 7.8Z" fill="none" stroke="#d0d0d0" stroke-width="1.4" stroke-linejoin="round"/></svg>
<span style="position:absolute;left:69.6px;top:953px;line-height:20px;white-space:pre;font-size:10.6px;color:#dadad5;-webkit-text-stroke:0.2px #dadad5;font-weight:bold;transform:scaleX(0.9541);transform-origin:0 0;">SSH FILE SYSTEMS</span>
<div style="position:absolute;left:398px;top:52px;width:979px;height:35px;background:#1e1f1c;"></div>
<div style="position:absolute;left:398px;top:52px;width:180px;height:35px;background:#414339;border-right:1px solid #1e1f1c"></div>
<svg style="position:absolute;left:410px;top:63px" width="14.2" height="12" viewBox="0 0 14.2 12"><path d="M3.2 0.2H13.3Q14.3 0.2 14.1 1.2L12 10.9Q11.8 11.8 10.9 11.8H0.8Q-0.2 11.8 0 10.9L2.2 1.1Q2.4 0.2 3.2 0.2Z" fill="url(#pg)"/><path d="M4.8 2.2L8.3 5.8" fill="none" stroke="#fff" stroke-width="1.5" stroke-linecap="round"/><path d="M8.3 5.8L3.3 9.4" fill="none" stroke="#f4f9fd" stroke-width="1.05" stroke-linecap="round"/><path d="M6.6 9.4H9.2" stroke="#d8e8f6" stroke-width="1.1" stroke-linecap="round"/></svg>
<span style="position:absolute;left:430.3px;top:61px;line-height:20px;white-space:pre;font-size:12.6px;color:#b6b6b0;-webkit-text-stroke:0.2px #b6b6b0;transform:scaleX(0.9875);transform-origin:0 0;">Example-Tables3.ps1</span>
<div style="position:absolute;left:578px;top:52px;width:179px;height:35px;background:#272822;"></div>
<svg style="position:absolute;left:590px;top:63px" width="14.2" height="12" viewBox="0 0 14.2 12"><path d="M3.2 0.2H13.3Q14.3 0.2 14.1 1.2L12 10.9Q11.8 11.8 10.9 11.8H0.8Q-0.2 11.8 0 10.9L2.2 1.1Q2.4 0.2 3.2 0.2Z" fill="url(#pg)"/><path d="M4.8 2.2L8.3 5.8" fill="none" stroke="#fff" stroke-width="1.5" stroke-linecap="round"/><path d="M8.3 5.8L3.3 9.4" fill="none" stroke="#f4f9fd" stroke-width="1.05" stroke-linecap="round"/><path d="M6.6 9.4H9.2" stroke="#d8e8f6" stroke-width="1.1" stroke-linecap="round"/></svg>
<span style="position:absolute;left:611.5px;top:61px;line-height:20px;white-space:pre;font-size:12.6px;color:#ffffff;-webkit-text-stroke:0.2px #ffffff;font-style:italic;transform:scaleX(0.9747);transform-origin:0 0;">Example-Tables6.ps1</span>
<svg style="position:absolute;left:738px;top:65px" width="10" height="10" viewBox="0 0 10 10"><path d="M1.4 1.4L8.6 8.6M8.6 1.4L1.4 8.6" stroke="#ecece7" stroke-width="2.1"/></svg>
<svg style="position:absolute;left:1222px;top:60px" width="150" height="20" viewBox="0 0 150 20"><g fill="none" stroke="#c5c5c5" stroke-width="1.2"><path d="M10 5.5V3.5H15.5L17.5 5.5V9"/><path d="M8.5 13.5H5.5V6.5H9"/><path d="M5.5 13.5V16.5H10"/></g><circle cx="12.5" cy="10.5" r="3.2" fill="none" stroke="#6fb6e8" stroke-width="1.5"/><path d="M14.8 12.8L18 16" stroke="#6fb6e8" stroke-width="1.8"/><path d="M37 4L49 10L37 16Z" fill="#c5c5c5"/><g transform="translate(74 10)"><rect x="-5.9" y="-5.9" width="11.8" height="11.8" transform="rotate(45)" fill="#c5c5c5" rx="0.9"/><path d="M-1.5 -4L0.2 -2.3V4.5M0.2 -2.3L3 0.5" stroke="#272822" stroke-width="1.2" fill="none"/><circle cx="0.2" cy="3.8" r="1.1" fill="#272822"/><circle cx="3" cy="0.6" r="1.1" fill="#272822"/><circle cx="0.2" cy="-2.3" r="1.1" fill="#272822"/></g><path d="M99.6 4.6H112.4V15.4H99.6Z M106 6V15.4" fill="none" stroke="#c5c5c5" stroke-width="1.2"/><path d="M99.6 3.8H112.4V6.8H99.6Z" fill="#c5c5c5"/><circle cx="132" cy="9.6" r="1.5" fill="#c5c5c5"/><circle cx="137.2" cy="9.6" r="1.5" fill="#c5c5c5"/><circle cx="142.4" cy="9.6" r="1.5" fill="#c5c5c5"/></svg>
<div id="ed"><div style="position:absolute;left:65px;top:234px;width:914px;height:18px;background:#3e3d32;"></div>
<div style="position:absolute;left:136.4px;top:234px;width:7.6px;height:18px;background:#3b3b31;border:1px solid #8a8a82"></div>
<div style="position:absolute;left:243.5px;top:234px;width:7.6px;height:18px;background:#3b3b31;border:1px solid #8a8a82"></div>
<div class="ln" style="top:0px">1</div>
<div class="cl" style="top:0px"><span class="cm">### prepare data</span></div>
<div class="ln" style="top:18px">2</div>
<div class="cl" style="top:18px"><span class="k">$</span><span class="w">hash </span><span class="k">=</span><span class="w"> [</span><span class="t">ordered</span><span class="w">] </span><span class="k">@</span><span class="w">{}</span></div>
<div class="ln" style="top:36px">3</div>
<div class="cl" style="top:36px"><span class="k">$</span><span class="w">hash</span><span class="f">.add</span><span class="w">(</span><span class="s">"HQ-1"</span><span class="k">,</span><span class="w"> </span><span class="s">"5.54.546"</span><span class="w">)</span></div>
<div class="ln" style="top:54px">4</div>
<div class="cl" style="top:54px"><span class="k">$</span><span class="w">hash</span><span class="f">.add</span><span class="w">(</span><span class="s">"EUR-1"</span><span class="k">,</span><span class="w"> </span><span class="s">"6.0.0.1"</span><span class="w">)</span></div>
<div class="ln" style="top:72px">5</div>
<div class="cl" style="top:72px"><span class="k">$</span><span class="w">hash</span><span class="f">.add</span><span class="w">(</span><span class="s">"HQ-2"</span><span class="k">,</span><span class="w"> </span><span class="s">"5.6"</span><span class="w">)</span></div>
<div class="ln" style="top:90px">6</div>
<div class="cl" style="top:90px"><span class="k">$</span><span class="w">hash</span><span class="f">.add</span><span class="w">(</span><span class="s">"EUR-2"</span><span class="k">,</span><span class="w"> </span><span class="s">"6.1.5"</span><span class="w">)</span></div>
<div class="ln" style="top:108px">7</div>
<div class="cl" style="top:108px"><span class="k">$</span><span class="w">hash</span><span class="f">.add</span><span class="w">(</span><span class="s">"EUR-3"</span><span class="k">,</span><span class="w"> </span><span class="s">"6.2"</span><span class="w">)</span></div>
<div class="ln" style="top:126px">8</div>
<div class="ln" style="top:144px">9</div>
<div class="cl" style="top:144px"><span class="k">$</span><span class="w">hash1 </span><span class="k">=</span><span class="w"> </span><span class="k">@</span><span class="w">{}</span></div>
<div class="ln" style="top:162px">10</div>
<div class="cl" style="top:162px"><span class="k">$</span><span class="w">hash1</span><span class="f">.add</span><span class="w">(</span><span class="s">"HQ-1"</span><span class="k">,</span><span class="w"> </span><span class="s">"5.54.546"</span><span class="w">)</span></div>
<div class="ln" style="top:180px">11</div>
<div class="cl" style="top:180px"><span class="k">$</span><span class="w">hash1</span><span class="f">.add</span><span class="w">(</span><span class="s">"EUR-1"</span><span class="k">,</span><span class="w"> </span><span class="s">"6.0.0.1"</span><span class="w">)</span></div>
<div class="ln" style="top:198px">12</div>
<div class="cl" style="top:198px"><span class="k">$</span><span class="w">hash1</span><span class="f">.add</span><span class="w">(</span><span class="s">"HQ-2"</span><span class="k">,</span><span class="w"> </span><span class="s">"5.6"</span><span class="w">)</span></div>
<div class="ln" style="top:216px">13</div>
<div class="cl" style="top:216px"><span class="k">$</span><span class="w">hash1</span><span class="f">.add</span><span class="w">(</span><span class="s">"EUR-2"</span><span class="k">,</span><span class="w"> </span><span class="s">"6.1.5"</span><span class="w">)</span></div>
<div class="ln cur" style="top:234px">14</div>
<div class="cl" style="top:234px"><span class="k">$</span><span class="w">hash1</span><span class="f">.add</span><span class="w">(</span><span class="s">"EUR-3"</span><span class="k">,</span><span class="w"> </span><span class="s">"6.2"</span><span class="w">)</span></div>
<div class="ln" style="top:252px">15</div>
<div class="ln" style="top:270px">16</div>
<div class="cl" style="top:270px"><span class="k">$</span><span class="w">hash2 </span><span class="k">=</span><span class="w"> </span><span class="k">@</span><span class="w">{}</span></div>
<div class="ln" style="top:288px">17</div>
<div class="cl" style="top:288px"><span class="k">$</span><span class="w">hash2</span><span class="f">.add</span><span class="w">(</span><span class="s">"HQ-1"</span><span class="k">,</span><span class="w"> </span><span class="s">"5.54.546"</span><span class="w">)</span></div>
<div class="ln" style="top:306px">18</div>
<div class="ln" style="top:324px">19</div>
<div class="cl" style="top:324px"><span class="k">$</span><span class="w">obj </span><span class="k">=</span><span class="w"> </span><span class="c">New-Object</span><span class="w"> System.Object</span></div>
<div class="ln" style="top:342px">20</div>
<div class="cl" style="top:342px"><span class="k">$</span><span class="w">obj </span><span class="k">|</span><span class="w"> </span><span class="c">Add-Member</span><span class="w"> </span><span class="k">-</span><span class="w">type NoteProperty </span><span class="k">-</span><span class="w">name Name </span><span class="k">-</span><span class="w">Value </span><span class="s">"Ryan_PC"</span></div>
<div class="ln" style="top:360px">21</div>
<div class="cl" style="top:360px"><span class="k">$</span><span class="w">obj </span><span class="k">|</span><span class="w"> </span><span class="c">Add-Member</span><span class="w"> </span><span class="k">-</span><span class="w">type NoteProperty </span><span class="k">-</span><span class="w">name Manufacturer </span><span class="k">-</span><span class="w">Value </span><span class="s">"Dell"</span></div>
<div class="ln" style="top:378px">22</div>
<div class="cl" style="top:378px"><span class="k">$</span><span class="w">obj </span><span class="k">|</span><span class="w"> </span><span class="c">Add-Member</span><span class="w"> </span><span class="k">-</span><span class="w">type NoteProperty </span><span class="k">-</span><span class="w">name ProcessorSpeed </span><span class="k">-</span><span class="w">Value </span><span class="s">"3 Ghz"</span></div>
<div class="ln" style="top:396px">23</div>
<div class="cl" style="top:396px"><span class="k">$</span><span class="w">obj </span><span class="k">|</span><span class="w"> </span><span class="c">Add-Member</span><span class="w"> </span><span class="k">-</span><span class="w">type NoteProperty </span><span class="k">-</span><span class="w">name Memory </span><span class="k">-</span><span class="w">Value </span><span class="s">"6 GB"</span></div>
<div class="ln" style="top:414px">24</div>
<div class="ln" style="top:432px">25</div>
<div class="cl" style="top:432px"><span class="k">$</span><span class="w">myObject2 </span><span class="k">=</span><span class="w"> </span><span class="c">New-Object</span><span class="w"> System.Object</span></div>
<div class="ln" style="top:450px">26</div>
<div class="cl" style="top:450px"><span class="k">$</span><span class="w">myObject2 </span><span class="k">|</span><span class="w"> </span><span class="c">Add-Member</span><span class="w"> </span><span class="k">-</span><span class="w">type NoteProperty </span><span class="k">-</span><span class="w">name Name </span><span class="k">-</span><span class="w">Value </span><span class="s">"Doug_PC"</span></div>
<div class="ln" style="top:468px">27</div>
<div class="cl" style="top:468px"><span class="k">$</span><span class="w">myObject2 </span><span class="k">|</span><span class="w"> </span><span class="c">Add-Member</span><span class="w"> </span><span class="k">-</span><span class="w">type NoteProperty </span><span class="k">-</span><span class="w">name Manufacturer </span><span class="k">-</span><span class="w">Value </span><span class="s">"HP"</span></div>
<div class="ln" style="top:486px">28</div>
<div class="cl" style="top:486px"><span class="k">$</span><span class="w">myObject2 </span><span class="k">|</span><span class="w"> </span><span class="c">Add-Member</span><span class="w"> </span><span class="k">-</span><span class="w">type NoteProperty </span><span class="k">-</span><span class="w">name ProcessorSpeed </span><span class="k">-</span><span class="w">Value </span><span class="s">"2.6 Ghz"</span></div>
<div class="ln" style="top:504px">29</div>
<div class="cl" style="top:504px"><span class="k">$</span><span class="w">myObject2 </span><span class="k">|</span><span class="w"> </span><span class="c">Add-Member</span><span class="w"> </span><span class="k">-</span><span class="w">type NoteProperty </span><span class="k">-</span><span class="w">name Memory </span><span class="k">-</span><span class="w">Value </span><span class="s">"4 GB"</span></div>
<div class="ln" style="top:522px">30</div>
<div class="ln" style="top:540px">31</div>
<div class="cl" style="top:540px"><span class="k">$</span><span class="w">myObject3 </span><span class="k">=</span><span class="w"> </span><span class="c">New-Object</span><span class="w"> System.Object</span></div>
<div class="ln" style="top:558px">32</div>
<div class="cl" style="top:558px"><span class="k">$</span><span class="w">myObject3 </span><span class="k">|</span><span class="w"> </span><span class="c">Add-Member</span><span class="w"> </span><span class="k">-</span><span class="w">type NoteProperty </span><span class="k">-</span><span class="w">name Name </span><span class="k">-</span><span class="w">Value </span><span class="s">"Julie_PC"</span></div>
<div class="ln" style="top:576px">33</div>
<div class="cl" style="top:576px"><span class="k">$</span><span class="w">myObject3 </span><span class="k">|</span><span class="w"> </span><span class="c">Add-Member</span><span class="w"> </span><span class="k">-</span><span class="w">type NoteProperty </span><span class="k">-</span><span class="w">name Manufacturer </span><span class="k">-</span><span class="w">Value </span><span class="s">"Compaq"</span></div>
<div class="ln" style="top:594px">34</div>
<div class="cl" style="top:594px"><span class="k">$</span><span class="w">myObject3 </span><span class="k">|</span><span class="w"> </span><span class="c">Add-Member</span><span class="w"> </span><span class="k">-</span><span class="w">type NoteProperty </span><span class="k">-</span><span class="w">name ProcessorSpeed </span><span class="k">-</span><span class="w">Value </span><span class="s">"2.0 Ghz"</span></div>
<div class="ln" style="top:612px">35</div>
<div class="cl" style="top:612px"><span class="k">$</span><span class="w">myObject3 </span><span class="k">|</span><span class="w"> </span><span class="c">Add-Member</span><span class="w"> </span><span class="k">-</span><span class="w">type NoteProperty </span><span class="k">-</span><span class="w">name Memory </span><span class="k">-</span><span class="w">Value </span><span class="s">"2.5 GB"</span></div>
<div class="ln" style="top:630px">36</div>
<div class="ln" style="top:648px">37</div>
<div class="cl" style="top:648px"><span class="k">$</span><span class="w">myArray </span><span class="k">=</span><span class="w"> </span><span class="k">@</span><span class="w">(</span><span class="k">$</span><span class="w">obj</span><span class="k">,</span><span class="w"> </span><span class="k">$</span><span class="w">myobject2</span><span class="k">,</span><span class="w"> </span><span class="k">$</span><span class="w">myObject3)</span></div>
<div class="ln" style="top:666px">38</div>
<div class="cl" style="top:666px"><span class="cm">### prepare data end</span></div>
<div class="ln" style="top:684px">39</div>
<div class="ln" style="top:702px">40</div>
<div class="cl" style="top:702px"><span class="c">Import-Module</span><span class="w"> PSWriteWord </span><span class="cm">#-Force</span></div>
<div class="ln" style="top:720px">41</div>
<div class="cl" style="top:720px"><span class="k">$</span><span class="w">FilePath </span><span class="k">=</span><span class="w"> </span><span class="s">"</span><span class="k">$</span><span class="s">Env:</span><span class="w">USERPROFILE</span><span class="s">\Desktop\PSWriteWord-Example-Tables6.docx"</span></div>
<div class="ln" style="top:738px">42</div>
<div class="ln" style="top:757px">43</div>
<div class="cl" style="top:757px"><span class="k">$</span><span class="w">WordDocument </span><span class="k">=</span><span class="w"> </span><span class="c">New-WordDocument</span><span class="w"> </span><span class="k">$</span><span class="w">FilePath</span></div>
<div class="cl bl" style="left:297px;top:234px">You, 22 hours ago • More testing on examples to make sure it's clear and error free</div>
<div style="position:absolute;left:965px;top:0px;width:1px;height:761px;background:#45463d;"></div>
<div style="position:absolute;left:966px;top:97px;width:13px;height:2px;background:#c4dcbc;"></div>
<div style="position:absolute;left:970px;top:99px;width:5.2px;height:7px;background:#a9a9a3;"></div></div>
<div style="position:absolute;left:398px;top:848px;width:979px;height:126px;background:#272822;border-top:1px solid #414339"></div>
<span style="position:absolute;left:433.8px;top:857px;line-height:20px;white-space:pre;font-size:11.4px;color:#77745f;-webkit-text-stroke:0.2px #77745f;transform:scaleX(0.9335);transform-origin:0 0;">PROBLEMS</span>
<span style="position:absolute;left:527.8px;top:857px;line-height:20px;white-space:pre;font-size:11.4px;color:#77745f;-webkit-text-stroke:0.2px #77745f;transform:scaleX(0.9738);transform-origin:0 0;">OUTPUT</span>
<span style="position:absolute;left:608.3px;top:857px;line-height:20px;white-space:pre;font-size:11.4px;color:#f8f8f2;-webkit-text-stroke:0.2px #f8f8f2;transform:scaleX(0.9880);transform-origin:0 0;">TERMINAL</span>
<div style="position:absolute;left:609px;top:880px;width:56px;height:1px;background:#a09b82;"></div>
<div style="position:absolute;left:1007px;top:857px;width:170px;height:21px;background:#414339;"></div>
<span style="position:absolute;left:1012.0px;top:859px;line-height:20px;white-space:pre;font-size:12.4px;color:#f0f0f0;-webkit-text-stroke:0.2px #f0f0f0;transform:scaleX(1.0589);transform-origin:0 0;">2: PowerShell Integrated</span>
<div style="position:absolute;left:1163.9px;top:864px;width:0;height:0;border-left:3.2px solid transparent;border-right:3.2px solid transparent;border-top:6.4px solid #f0f0f0"></div>
<svg style="position:absolute;left:1188px;top:856px" width="180" height="24" viewBox="0 0 180 24"><g fill="#c5c5c5"><path d="M12 6.5H15V10.5H19V13.5H15V17.5H12V13.5H8V10.5H12Z"/><path d="M38 5H52.2V17.4H38Z M39.3 7.8V16.1H44.4V7.8Z M45.8 7.8V16.1H50.9V7.8Z" fill-rule="evenodd"/><path d="M71 6.2H82V7.8H71Z M74.3 4.2H78.7V6.2H74.3Z M72 8.8H81L80.3 17.8H72.7Z"/><path d="M132.6 5.4H147V17.6H132.6Z M133.9 6.7V16.3H141.4V6.7Z" fill-rule="evenodd"/></g><path d="M74.9 9.8V16.6M76.5 9.8V16.6M78.1 9.8V16.6" stroke="#272822" stroke-width="0.8"/><path d="M102.2 13.6L108 7.8L113.8 13.6" fill="none" stroke="#c5c5c5" stroke-width="1.9"/><path d="M167.3 7.8L174.7 15.2M174.7 7.8L167.3 15.2" stroke="#ecece7" stroke-width="2.3"/></svg>
<div id="term">PS C:\Users\pklys\OneDrive - Evotec\Support\GitHub\PSWriteWord\Examples&gt; c:\Users\pklys\OneDrive - Evotec\Support\GitHub\PSWriteWord\E
xamples\Example-Tables3.ps1


PS C:\Users\pklys\OneDrive - Evotec\Support\GitHub\PSWriteWord\Examples&gt; </div>
<div style="position:absolute;left:979.7px;top:955px;width:8.5px;height:17.2px;background:transparent;border:1.25px solid #fafaf6"></div>
<div style="position:absolute;left:0px;top:974px;width:1377px;height:22px;background:#414339;"></div>
<svg style="position:absolute;left:14px;top:979px" width="8" height="13" viewBox="0 0 8 13"><g fill="none" stroke="#fff" stroke-width="1.2"><circle cx="2" cy="2.2" r="1.4"/><circle cx="6" cy="3.4" r="1.4"/><circle cx="2" cy="10.8" r="1.4"/><path d="M2 3.6V9.4M6 4.8C6 7.4 2 6.8 2 9.4"/></g></svg>
<span style="position:absolute;left:26.7px;top:976px;line-height:20px;white-space:pre;font-size:12.4px;color:#fff;-webkit-text-stroke:0.2px #fff;transform:scaleX(0.9789);transform-origin:0 0;">master*</span>
<svg style="position:absolute;left:82px;top:979px" width="13" height="13" viewBox="0 0 13 13"><g fill="none" stroke="#fff" stroke-width="1.8"><path d="M1.6 6.5A4.9 4.7 0 0 1 10.4 3.6"/><path d="M11.4 6.5A4.9 4.7 0 0 1 2.6 9.4"/></g><path d="M12.2 0.6V5.4H7.6Z M0.8 12.4V7.6H5.4Z" fill="#fff"/></svg>
<svg style="position:absolute;left:107px;top:980px" width="11" height="11" viewBox="0 0 11 11"><circle cx="5.5" cy="5.5" r="5.5" fill="#fff"/><path d="M3.3 3.3L7.7 7.7M7.7 3.3L3.3 7.7" stroke="#414339" stroke-width="1.6"/></svg>
<span style="position:absolute;left:120.6px;top:976px;line-height:20px;white-space:pre;font-size:12.4px;color:#fff;-webkit-text-stroke:0.2px #fff;transform:scaleX(1.1584);transform-origin:0 0;">0</span>
<svg style="position:absolute;left:132.7px;top:979.5px" width="12.4" height="11.5" viewBox="0 0 12.4 11.5"><path d="M6.2 0.2L12.2 11.3H0.2Z" fill="#fff"/><path d="M6.2 3.8V7.8M6.2 8.8V10.2" stroke="#414339" stroke-width="1.5"/></svg>
<span style="position:absolute;left:147.3px;top:976px;line-height:20px;white-space:pre;font-size:12.4px;color:#fff;-webkit-text-stroke:0.2px #fff;transform:scaleX(1.1584);transform-origin:0 0;">0</span>
<svg style="position:absolute;left:166px;top:978px" width="9" height="15" viewBox="0 0 9 15"><g fill="none" stroke="#fff" stroke-width="1.2"><circle cx="4.5" cy="2.6" r="1.9"/><path d="M1 5.6H8V10H6.4V14.2H2.6V10H1Z"/><path d="M4.5 10.5V14"/></g></svg>
<span style="position:absolute;left:176.8px;top:976px;line-height:20px;white-space:pre;font-size:12.4px;color:#fff;-webkit-text-stroke:0.2px #fff;transform:scaleX(0.9389);transform-origin:0 0;">Przemysław</span>
<svg style="position:absolute;left:253px;top:979px" width="12" height="12" viewBox="0 0 12 12"><path d="M5 1.8H0.8V11.2H9.8V7.4" fill="none" stroke="#fff" stroke-width="1.4"/><path d="M6.4 0.4H11.8V5.8L10 4L6.4 7.6L4.6 5.8L8.2 2.2Z" fill="#fff"/></svg>
<span style="position:absolute;left:266.9px;top:976px;line-height:20px;white-space:pre;font-size:12.4px;color:#fff;-webkit-text-stroke:0.2px #fff;transform:scaleX(0.9432);transform-origin:0 0;">Share</span>
<span style="position:absolute;left:311.5px;top:976px;line-height:20px;white-space:pre;font-size:12.4px;color:#fff;-webkit-text-stroke:0.2px #fff;transform:scaleX(1.0062);transform-origin:0 0;">Auto Attach: Off</span>
<svg style="position:absolute;left:835px;top:981px" width="13" height="9" viewBox="0 0 13 9"><circle cx="6.5" cy="4.5" r="2.9" fill="none" stroke="#fff" stroke-width="1.9"/><path d="M0 4.5H3.6M9.4 4.5H13" stroke="#fff" stroke-width="1.5"/></svg>
<span style="position:absolute;left:850.5px;top:976px;line-height:20px;white-space:pre;font-size:12.4px;color:#fff;-webkit-text-stroke:0.2px #fff;transform:scaleX(0.9487);transform-origin:0 0;">You, 22 hours ago</span>
<span style="position:absolute;left:965.3px;top:976px;line-height:20px;white-space:pre;font-size:12.4px;color:#fff;-webkit-text-stroke:0.2px #fff;transform:scaleX(0.9306);transform-origin:0 0;">Ln 14, Col 27</span>
<span style="position:absolute;left:1048.3px;top:976px;line-height:20px;white-space:pre;font-size:12.4px;color:#fff;-webkit-text-stroke:0.2px #fff;transform:scaleX(0.8946);transform-origin:0 0;">Spaces: 4</span>
<span style="position:absolute;left:1112.0px;top:976px;line-height:20px;white-space:pre;font-size:12.4px;color:#fff;-webkit-text-stroke:0.2px #fff;transform:scaleX(0.9171);transform-origin:0 0;">UTF-8</span>
<span style="position:absolute;left:1158.2px;top:976px;line-height:20px;white-space:pre;font-size:12.4px;color:#fff;-webkit-text-stroke:0.2px #fff;transform:scaleX(0.8437);transform-origin:0 0;">CRLF</span>
<span style="position:absolute;left:1199.5px;top:976px;line-height:20px;white-space:pre;font-size:12.4px;color:#fff;-webkit-text-stroke:0.2px #fff;transform:scaleX(0.9284);transform-origin:0 0;">PowerShell</span>
<svg style="position:absolute;left:1272.6px;top:979.6px" width="13" height="12" viewBox="0 0 13 12"><rect x="0.7" y="0.7" width="11.6" height="9.8" rx="1.2" fill="none" stroke="#a6e22e" stroke-width="1.3"/><path d="M3.2 3L6 5.4L3.2 7.8M6.8 8.2H9.6" fill="none" stroke="#a6e22e" stroke-width="1.2"/></svg>
<span style="position:absolute;left:1287.7px;top:976px;line-height:20px;white-space:pre;font-size:12.4px;color:#a6e22e;-webkit-text-stroke:0.2px #a6e22e;transform:scaleX(0.8936);transform-origin:0 0;">5.1</span>
<svg style="position:absolute;left:1319.5px;top:977.5px" width="15" height="15" viewBox="0 0 15 15"><circle cx="7.5" cy="7.5" r="7.2" fill="#fff"/><circle cx="5" cy="5.6" r="1.05" fill="#414339"/><circle cx="10" cy="5.6" r="1.05" fill="#414339"/><path d="M3.6 8.6Q7.5 13.2 11.4 8.6" fill="none" stroke="#414339" stroke-width="1.2"/></svg>
<svg style="position:absolute;left:1349px;top:978px" width="14.4" height="15" viewBox="0 0 14.4 15"><path d="M7.2 0.8C10 1.4 11 4 11.1 6.5C11.2 9 12.2 10.4 14 11.6H0.4C2.2 10.4 3.2 9 3.3 6.5C3.4 4 4.4 1.4 7.2 0.8Z M5.4 12.6H9Q8.8 14.4 7.2 14.4Q5.6 14.4 5.4 12.6Z" fill="#fff"/></svg>
</div>
<div style="position:absolute;left:0;top:0;width:1379px;height:2px;background:#000"></div><div style="position:absolute;left:1377px;top:2px;width:1px;height:994px;background:#191917"></div>
</body></html>
